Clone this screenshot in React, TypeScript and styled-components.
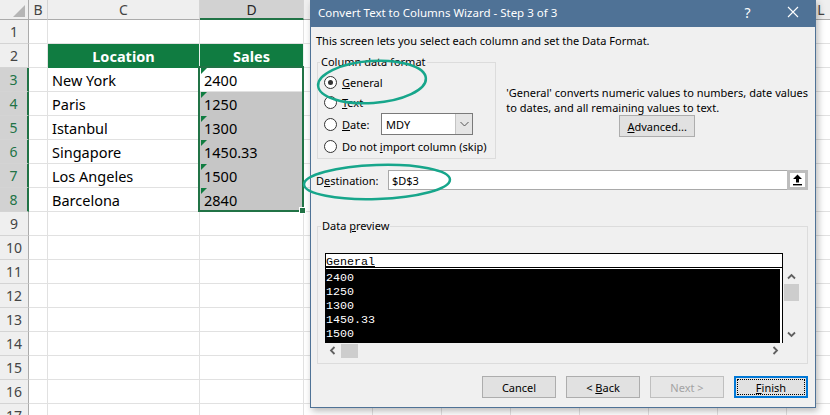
import React from "react";
import styled, { createGlobalStyle, css } from "styled-components";

const GlobalStyle = createGlobalStyle`
  html, body { margin: 0; padding: 0; background: #fff; }
  #root { width: 830px; height: 415px; overflow: hidden; }
`;

const Page = styled.div`
  position: relative;
  width: 830px;
  height: 415px;
  overflow: hidden;
  background: #fff;
`;

/* ---------- spreadsheet ---------- */

const Sheet = styled.div`
  display: grid;
  grid-template-columns: 29px 19px 152px 104px repeat(8, 69px);
  grid-template-rows: 20px;
  grid-auto-rows: 24px;
  font-family: "Noto Sans", sans-serif;
`;

const Corner = styled.div`
  position: relative;
  box-sizing: border-box;
  background: #efefef;
  border-right: 1px solid #ababab;
  border-bottom: 1px solid #ababab;
  &::after {
    content: "";
    position: absolute;
    right: 3px;
    bottom: 2px;
    width: 0;
    height: 0;
    border-left: 12px solid transparent;
    border-bottom: 12px solid #b5b5b5;
  }
`;

const ColHead = styled.div<{ $sel?: boolean }>`
  box-sizing: border-box;
  display: flex;
  align-items: center;
  justify-content: center;
  background: ${(p) => (p.$sel ? "#d2d2d2" : "#efefef")};
  border-right: 1px solid #d4d4d4;
  border-bottom: ${(p) => (p.$sel ? "2px solid #217346" : "1px solid #ababab")};
  color: ${(p) => (p.$sel ? "#262626" : "#444")};
  font-size: 14px;
  padding-top: ${(p) => (p.$sel ? "1px" : "0")};
`;

const RowHead = styled.div<{ $sel?: boolean }>`
  box-sizing: border-box;
  display: flex;
  align-items: center;
  justify-content: center;
  background: ${(p) => (p.$sel ? "#d2d2d2" : "#efefef")};
  border-bottom: 1px solid #d4d4d4;
  border-right: ${(p) => (p.$sel ? "2px solid #217346" : "1px solid #ababab")};
  color: ${(p) => (p.$sel ? "#217346" : "#444")};
  font-size: 14px;
`;

type CellKind = "plain" | "head" | "active" | "sel";

const Cell = styled.div<{ $kind: CellKind; $flag?: boolean }>`
  position: relative;
  box-sizing: border-box;
  display: flex;
  align-items: center;
  padding-left: 4px;
  border-right: 1px solid #e1e1e1;
  border-bottom: 1px solid #e1e1e1;
  font-size: 14.5px;
  color: #000;
  white-space: nowrap;
  overflow: hidden;
  ${(p) =>
    p.$kind === "head" &&
    css`
      background: #107c41;
      color: #fff;
      font-weight: 700;
      justify-content: center;
      padding-left: 0;
      border-right-color: #e8f1ec;
      border-bottom-color: #107c41;
    `}
  ${(p) =>
    p.$kind === "sel" &&
    css`
      background: #c6c6c6;
      border-bottom-color: #c6c6c6;
    `}
  ${(p) =>
    p.$flag &&
    css`
      &::before {
        content: "";
        position: absolute;
        left: 1px;
        top: 0;
        border-top: 6px solid #107c41;
        border-right: 6px solid transparent;
      }
    `}
`;

const Selection = styled.div`
  position: absolute;
  left: 198px;
  top: 66px;
  width: 106px;
  height: 146px;
  box-sizing: border-box;
  border: 2px solid #217346;
  pointer-events: none;
`;

const FillHandle = styled.div`
  position: absolute;
  left: 299px;
  top: 207px;
  width: 7px;
  height: 7px;
  box-sizing: border-box;
  background: #217346;
  border: 1px solid #fff;
`;

/* ---------- dialog ---------- */

const Dialog = styled.div`
  position: absolute;
  left: 310px;
  top: 0;
  width: 506px;
  height: 408px;
  box-sizing: border-box;
  background: #f0f0f0;
  border: 1px solid #4f7296;
  border-top: 0;
  box-shadow: 2px 3px 7px rgba(0, 0, 0, 0.28);
  display: flex;
  flex-direction: column;
  font-family: "Noto Sans", sans-serif;
  font-size: 11px;
  color: #000;
`;

const TitleBar = styled.div`
  flex: none;
  height: 27px;
  box-sizing: border-box;
  background: #4f7296;
  color: #fff;
  display: flex;
  align-items: center;
  padding: 0 0 3px 7px;
  font-size: 11.5px;
`;

const TitleText = styled.div`
  flex: 1;
  white-space: nowrap;
`;

const TitleButton = styled.div`
  width: 45px;
  height: 100%;
  display: flex;
  align-items: center;
  justify-content: center;
  font-size: 14px;
`;

const Body = styled.div`
  flex: 1;
  display: flex;
  flex-direction: column;
  padding: 6px 7px 0 5px;
`;

const Line = styled.div`
  line-height: 16px;
  white-space: nowrap;
`;

const U = styled.span`
  text-decoration: underline;
`;

const FormatRow = styled.div`
  display: flex;
  align-items: flex-start;
  margin-top: 5px;
`;

const Group = styled.fieldset<{ $w: number }>`
  margin: 0 0 0 1px;
  width: ${(p) => p.$w}px;
  box-sizing: border-box;
  min-width: 0;
  border: 1px solid #dcdcdc;
  padding: 2px 6px 2px 6px;
`;

const GroupLegend = styled.legend`
  margin-left: -4px;
  padding: 0 1px;
  line-height: 16px;
  font-size: 11px;
`;

const RadioRow = styled.div<{ $h: number }>`
  height: ${(p) => p.$h}px;
  display: flex;
  align-items: center;
  gap: 5px;
  white-space: nowrap;
`;

const Radio = styled.span<{ $on?: boolean }>`
  position: relative;
  flex: none;
  width: 13px;
  height: 13px;
  box-sizing: border-box;
  border-radius: 50%;
  border: 1px solid #333;
  background: #fff;
  ${(p) =>
    p.$on &&
    css`
      &::after {
        content: "";
        position: absolute;
        left: 3px;
        top: 3px;
        width: 5px;
        height: 5px;
        border-radius: 50%;
        background: #333;
      }
    `}
`;

const DateLabel = styled.span`
  width: 34px;
`;

const Select = styled.div`
  width: 92px;
  height: 22px;
  box-sizing: border-box;
  border: 1px solid #7a7a7a;
  background: #fff;
  display: flex;
  align-items: center;
`;

const SelectValue = styled.span`
  flex: 1;
  padding-left: 4px;
`;

const SelectArrow = styled.span`
  width: 16px;
  height: 100%;
  background: #e5e5e5;
  border-left: 1px solid #c4c4c4;
  display: flex;
  align-items: center;
  justify-content: center;
`;

const RightCol = styled.div`
  flex: 1;
  margin-left: 10px;
  padding-top: 31px;
  display: flex;
  flex-direction: column;
  align-items: center;
`;

const Explain = styled.div`
  align-self: stretch;
  line-height: 15px;
  white-space: nowrap;
`;

const Btn = styled.div<{ $w?: number; $disabled?: boolean; $default?: boolean }>`
  position: relative;
  width: ${(p) => p.$w ?? 74}px;
  height: 22px;
  box-sizing: border-box;
  display: flex;
  align-items: center;
  justify-content: center;
  background: #e1e1e1;
  border: 1px solid #adadad;
  color: #000;
  white-space: nowrap;
  ${(p) =>
    p.$disabled &&
    css`
      color: #a3a3a3;
      border-color: #bfbfbf;
      background: #e6e6e6;
    `}
  ${(p) =>
    p.$default &&
    css`
      border: 2px solid #0078d7;
      &::after {
        content: "";
        position: absolute;
        inset: 1px;
        border: 1px dotted #000;
      }
    `}
`;

const DestRow = styled.div`
  display: flex;
  align-items: center;
  height: 20px;
  margin-top: 11px;
`;

const DestLabel = styled.span`
  width: 72px;
  flex: none;
`;

const DestBox = styled.div`
  flex: 1;
  height: 20px;
  box-sizing: border-box;
  border: 1px solid #a9a9a9;
  border-right: 0;
  background: #fff;
  display: flex;
  align-items: center;
  padding-left: 3px;
`;

const RefButton = styled.div`
  width: 21px;
  height: 20px;
  box-sizing: border-box;
  border: 3px solid #bdbdbd;
  background: #fff;
  display: flex;
  align-items: center;
  justify-content: center;
`;

const PreviewGroup = styled(Group)`
  margin-top: 28px;
  padding: 19px 7px 5px 7px;
`;

const PreviewGrid = styled.div`
  display: grid;
  grid-template-columns: 458px 17px;
  grid-template-rows: 90px 15px;
`;

const DataBox = styled.div`
  box-sizing: border-box;
  border: 1px solid #000;
  border-bottom: 0;
  background: #fff;
  display: flex;
  flex-direction: column;
  overflow: hidden;
  font-family: "Liberation Mono", monospace;
  font-size: 11.67px;
`;

const DataHeader = styled.div`
  height: 13px;
  line-height: 17px;
  border-bottom: 1px solid #000;
  text-decoration: underline;
  color: #000;
  overflow: hidden;
`;

const DataBody = styled.div`
  flex: 1;
  margin: 1px 2px 0 -1px;
  padding: 2px 0 0 1px;
  background: #000;
  color: #fff;
  line-height: 14px;
`;

const VScroll = styled.div`
  display: flex;
  flex-direction: column;
  align-items: center;
  padding-top: 17px;
  padding-bottom: 2px;
`;

const HScroll = styled.div`
  display: flex;
  align-items: center;
`;

const ArrowBox = styled.div<{ $w: number; $h: number }>`
  width: ${(p) => p.$w}px;
  height: ${(p) => p.$h}px;
  flex: none;
  display: flex;
  align-items: center;
  justify-content: center;
`;

const Thumb = styled.div<{ $w: number; $h: number }>`
  width: ${(p) => p.$w}px;
  height: ${(p) => p.$h}px;
  flex: none;
  background: #cdcdcd;
`;

const Spacer = styled.div`
  flex: 1;
`;

const ButtonRow = styled.div`
  display: flex;
  justify-content: flex-end;
  gap: 10px;
  margin-top: 12px;
`;

const Annotations = styled.svg`
  position: absolute;
  left: 0;
  top: 0;
  pointer-events: none;
`;

/* ---------- icons ---------- */

const Chevron = ({ dir }: { dir: "up" | "down" | "left" | "right" }) => {
  const pts: Record<string, string> = {
    up: "1,5.5 4.5,2 8,5.5",
    down: "1,2.5 4.5,6 8,2.5",
    left: "5.5,1 2,4.5 5.5,8",
    right: "2.5,1 6,4.5 2.5,8",
  };
  return (
    <svg width="9" height="9" viewBox="0 0 9 9">
      <polyline points={pts[dir]} fill="none" stroke="#606060" strokeWidth="1.8" />
    </svg>
  );
};

const CloseIcon = () => (
  <svg width="12" height="12" viewBox="0 0 12 12">
    <path d="M1 1 L11 11 M11 1 L1 11" stroke="#fff" strokeWidth="1.1" />
  </svg>
);

const RefIcon = () => (
  <svg width="11" height="12" viewBox="0 0 11 12">
    <polygon points="5.5,0.5 10,5 7,5 7,8.5 4,8.5 4,5 1,5" fill="#000" />
    <rect x="1" y="10" width="9" height="1.4" fill="#000" />
  </svg>
);

/* ---------- data ---------- */

const COLS = ["B", "C", "D", "E", "F", "G", "H", "I", "J", "K", "L"];
const SHOWN_LETTERS = new Set(["B", "C", "D", "L"]);
const DATA: [string, string][] = [
  ["New York", "2400"],
  ["Paris", "1250"],
  ["Istanbul", "1300"],
  ["Singapore", "1450.33"],
  ["Los Angeles", "1500"],
  ["Barcelona", "2840"],
];
const PREVIEW = ["2400", "1250", "1300", "1450.33", "1500"];

function SheetRow({ n }: { n: number }) {
  const sel = n >= 3 && n <= 8;
  const cells: React.ReactNode[] = [];
  COLS.forEach((c) => {
    let kind: CellKind = "plain";
    let text = "";
    let flag = false;
    if (n === 2 && c === "C") {
      kind = "head";
      text = "Location";
    } else if (n === 2 && c === "D") {
      kind = "head";
      text = "Sales";
    } else if (sel && c === "C") {
      text = DATA[n - 3][0];
    } else if (sel && c === "D") {
      text = DATA[n - 3][1];
      kind = n === 3 ? "active" : "sel";
      flag = true;
    }
    cells.push(
      <Cell key={c} $kind={kind} $flag={flag}>
        {text}
      </Cell>
    );
  });
  return (
    <>
      <RowHead $sel={sel}>{n}</RowHead>
      {cells}
    </>
  );
}

export default function App() {
  const rows = Array.from({ length: 17 }, (_, i) => i + 1);
  return (
    <Page>
      <GlobalStyle />
      <Sheet>
        <Corner />
        {COLS.map((c) => (
          <ColHead key={c} $sel={c === "D"}>
            {SHOWN_LETTERS.has(c) ? c : ""}
          </ColHead>
        ))}
        {rows.map((n) => (
          <SheetRow key={n} n={n} />
        ))}
      </Sheet>
      <Selection />
      <FillHandle />

      <Dialog>
        <TitleBar>
          <TitleText>Convert Text to Columns Wizard - Step 3 of 3</TitleText>
          <TitleButton>?</TitleButton>
          <TitleButton>
            <CloseIcon />
          </TitleButton>
        </TitleBar>
        <Body>
          <Line>This screen lets you select each column and set the Data Format.</Line>
          <FormatRow>
            <Group $w={180}>
              <GroupLegend>Column data format</GroupLegend>
              <RadioRow $h={20}>
                <Radio $on />
                <span>
                  <U>G</U>eneral
                </span>
              </RadioRow>
              <RadioRow $h={20}>
                <Radio />
                <span>
                  <U>T</U>ext
                </span>
              </RadioRow>
              <RadioRow $h={24}>
                <Radio />
                <DateLabel>
                  <U>D</U>ate:
                </DateLabel>
                <Select>
                  <SelectValue>MDY</SelectValue>
                  <SelectArrow>
                    <svg width="9" height="6" viewBox="0 0 9 6">
                      <polyline points="0.5,1 4.5,5 8.5,1" fill="none" stroke="#555" strokeWidth="1" />
                    </svg>
                  </SelectArrow>
                </Select>
              </RadioRow>
              <RadioRow $h={20}>
                <Radio />
                <span>
                  Do not <U>i</U>mport column (skip)
                </span>
              </RadioRow>
            </Group>
            <RightCol>
              <Explain>
                'General' converts numeric values to numbers, date values
                <br />
                to dates, and all remaining values to text.
              </Explain>
              <Btn $w={76}>
                <span>
                  <U>A</U>dvanced...
                </span>
              </Btn>
            </RightCol>
          </FormatRow>

          <DestRow>
            <DestLabel>
              D<U>e</U>stination:
            </DestLabel>
            <DestBox>$D$3</DestBox>
            <RefButton>
              <RefIcon />
            </RefButton>
          </DestRow>

          <PreviewGroup $w={491}>
            <GroupLegend>
              Data <U>p</U>review
            </GroupLegend>
            <PreviewGrid>
              <DataBox>
                <DataHeader>General</DataHeader>
                <DataBody>
                  {PREVIEW.map((v) => (
                    <div key={v}>{v}</div>
                  ))}
                </DataBody>
              </DataBox>
              <VScroll>
                <ArrowBox $w={17} $h={14}>
                  <Chevron dir="up" />
                </ArrowBox>
                <Thumb $w={15} $h={17} />
                <Spacer />
                <ArrowBox $w={17} $h={14}>
                  <Chevron dir="down" />
                </ArrowBox>
              </VScroll>
              <HScroll>
                <ArrowBox $w={16} $h={15}>
                  <Chevron dir="left" />
                </ArrowBox>
                <Thumb $w={17} $h={14} />
                <Spacer />
                <ArrowBox $w={16} $h={15}>
                  <Chevron dir="right" />
                </ArrowBox>
              </HScroll>
            </PreviewGrid>
          </PreviewGroup>

          <ButtonRow>
            <Btn>Cancel</Btn>
            <Btn>
              <span>
                &lt; <U>B</U>ack
              </span>
            </Btn>
            <Btn $disabled>Next &gt;</Btn>
            <Btn $default>
              <span>
                <U>F</U>inish
              </span>
            </Btn>
          </ButtonRow>
        </Body>
      </Dialog>

      <Annotations width="830" height="415" viewBox="0 0 830 415">
        <ellipse
          cx="372"
          cy="82"
          rx="54"
          ry="21"
          transform="rotate(-4 372 82)"
          fill="none"
          stroke="#17a68b"
          strokeWidth="2.5"
        />
        <ellipse
          cx="377"
          cy="182"
          rx="73"
          ry="17"
          transform="rotate(-2 377 182)"
          fill="none"
          stroke="#17a68b"
          strokeWidth="2.5"
        />
      </Annotations>
    </Page>
  );
}
